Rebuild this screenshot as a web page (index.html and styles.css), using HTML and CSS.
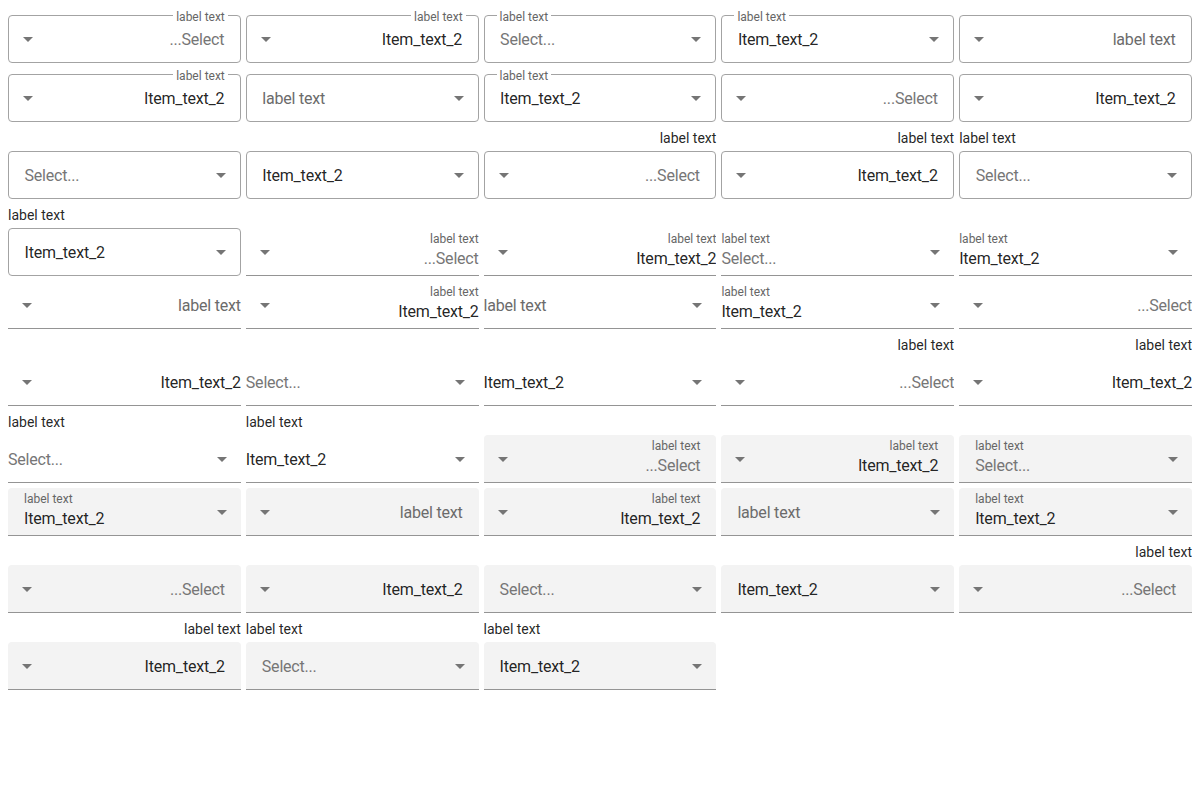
FILE: index.html
```html
<!DOCTYPE html>
<html lang="en">
<head>
<meta charset="utf-8">
<title>Select variants</title>
<link rel="stylesheet" href="styles.css">
</head>
<body>
<div class="grid">
  <!-- outlined -->
  <div class="cell o pad" dir="rtl"><div class="field"><span class="notch">label text</span><span class="text ph">Select...</span><svg class="arrow" viewBox="0 0 24 24"><path d="M7 10l5 5 5-5z"/></svg></div></div>
  <div class="cell o pad" dir="rtl"><div class="field"><span class="notch">label text</span><span class="text val">Item_text_2</span><svg class="arrow" viewBox="0 0 24 24"><path d="M7 10l5 5 5-5z"/></svg></div></div>
  <div class="cell o pad"><div class="field"><span class="notch">label text</span><span class="text ph">Select...</span><svg class="arrow" viewBox="0 0 24 24"><path d="M7 10l5 5 5-5z"/></svg></div></div>
  <div class="cell o pad"><div class="field"><span class="notch">label text</span><span class="text val">Item_text_2</span><svg class="arrow" viewBox="0 0 24 24"><path d="M7 10l5 5 5-5z"/></svg></div></div>
  <div class="cell o pad" dir="rtl"><div class="field"><span class="text lbl">label text</span><svg class="arrow" viewBox="0 0 24 24"><path d="M7 10l5 5 5-5z"/></svg></div></div>

  <div class="cell o pad" dir="rtl"><div class="field"><span class="notch">label text</span><span class="text val">Item_text_2</span><svg class="arrow" viewBox="0 0 24 24"><path d="M7 10l5 5 5-5z"/></svg></div></div>
  <div class="cell o pad"><div class="field"><span class="text lbl">label text</span><svg class="arrow" viewBox="0 0 24 24"><path d="M7 10l5 5 5-5z"/></svg></div></div>
  <div class="cell o pad"><div class="field"><span class="notch">label text</span><span class="text val">Item_text_2</span><svg class="arrow" viewBox="0 0 24 24"><path d="M7 10l5 5 5-5z"/></svg></div></div>
  <div class="cell o pad" dir="rtl"><div class="field"><span class="text ph">Select...</span><svg class="arrow" viewBox="0 0 24 24"><path d="M7 10l5 5 5-5z"/></svg></div></div>
  <div class="cell o pad" dir="rtl"><div class="field"><span class="text val">Item_text_2</span><svg class="arrow" viewBox="0 0 24 24"><path d="M7 10l5 5 5-5z"/></svg></div></div>

  <div class="cell o pad"><div class="field"><span class="text ph">Select...</span><svg class="arrow" viewBox="0 0 24 24"><path d="M7 10l5 5 5-5z"/></svg></div></div>
  <div class="cell o pad"><div class="field"><span class="text val">Item_text_2</span><svg class="arrow" viewBox="0 0 24 24"><path d="M7 10l5 5 5-5z"/></svg></div></div>
  <div class="cell o" dir="rtl"><div class="above">label text</div><div class="field"><span class="text ph">Select...</span><svg class="arrow" viewBox="0 0 24 24"><path d="M7 10l5 5 5-5z"/></svg></div></div>
  <div class="cell o" dir="rtl"><div class="above">label text</div><div class="field"><span class="text val">Item_text_2</span><svg class="arrow" viewBox="0 0 24 24"><path d="M7 10l5 5 5-5z"/></svg></div></div>
  <div class="cell o"><div class="above">label text</div><div class="field"><span class="text ph">Select...</span><svg class="arrow" viewBox="0 0 24 24"><path d="M7 10l5 5 5-5z"/></svg></div></div>

  <div class="cell o"><div class="above">label text</div><div class="field"><span class="text val">Item_text_2</span><svg class="arrow" viewBox="0 0 24 24"><path d="M7 10l5 5 5-5z"/></svg></div></div>

  <!-- standard -->
  <div class="cell s" dir="rtl"><div class="field float"><span class="text"><span class="small">label text</span><span class="ph">Select...</span></span><svg class="arrow" viewBox="0 0 24 24"><path d="M7 10l5 5 5-5z"/></svg></div></div>
  <div class="cell s" dir="rtl"><div class="field float"><span class="text"><span class="small">label text</span><span class="val">Item_text_2</span></span><svg class="arrow" viewBox="0 0 24 24"><path d="M7 10l5 5 5-5z"/></svg></div></div>
  <div class="cell s"><div class="field float"><span class="text"><span class="small">label text</span><span class="ph">Select...</span></span><svg class="arrow" viewBox="0 0 24 24"><path d="M7 10l5 5 5-5z"/></svg></div></div>
  <div class="cell s"><div class="field float"><span class="text"><span class="small">label text</span><span class="val">Item_text_2</span></span><svg class="arrow" viewBox="0 0 24 24"><path d="M7 10l5 5 5-5z"/></svg></div></div>

  <div class="cell s" dir="rtl"><div class="field"><span class="text lbl">label text</span><svg class="arrow" viewBox="0 0 24 24"><path d="M7 10l5 5 5-5z"/></svg></div></div>
  <div class="cell s" dir="rtl"><div class="field float"><span class="text"><span class="small">label text</span><span class="val">Item_text_2</span></span><svg class="arrow" viewBox="0 0 24 24"><path d="M7 10l5 5 5-5z"/></svg></div></div>
  <div class="cell s"><div class="field"><span class="text lbl">label text</span><svg class="arrow" viewBox="0 0 24 24"><path d="M7 10l5 5 5-5z"/></svg></div></div>
  <div class="cell s"><div class="field float"><span class="text"><span class="small">label text</span><span class="val">Item_text_2</span></span><svg class="arrow" viewBox="0 0 24 24"><path d="M7 10l5 5 5-5z"/></svg></div></div>
  <div class="cell s" dir="rtl"><div class="field"><span class="text ph">Select...</span><svg class="arrow" viewBox="0 0 24 24"><path d="M7 10l5 5 5-5z"/></svg></div></div>

  <div class="cell s" dir="rtl"><div class="field"><span class="text val">Item_text_2</span><svg class="arrow" viewBox="0 0 24 24"><path d="M7 10l5 5 5-5z"/></svg></div></div>
  <div class="cell s"><div class="field"><span class="text ph">Select...</span><svg class="arrow" viewBox="0 0 24 24"><path d="M7 10l5 5 5-5z"/></svg></div></div>
  <div class="cell s"><div class="field"><span class="text val">Item_text_2</span><svg class="arrow" viewBox="0 0 24 24"><path d="M7 10l5 5 5-5z"/></svg></div></div>
  <div class="cell s" dir="rtl"><div class="above">label text</div><div class="field"><span class="text ph">Select...</span><svg class="arrow" viewBox="0 0 24 24"><path d="M7 10l5 5 5-5z"/></svg></div></div>
  <div class="cell s" dir="rtl"><div class="above">label text</div><div class="field"><span class="text val">Item_text_2</span><svg class="arrow" viewBox="0 0 24 24"><path d="M7 10l5 5 5-5z"/></svg></div></div>

  <div class="cell s"><div class="above">label text</div><div class="field"><span class="text ph">Select...</span><svg class="arrow" viewBox="0 0 24 24"><path d="M7 10l5 5 5-5z"/></svg></div></div>
  <div class="cell s"><div class="above">label text</div><div class="field"><span class="text val">Item_text_2</span><svg class="arrow" viewBox="0 0 24 24"><path d="M7 10l5 5 5-5z"/></svg></div></div>

  <!-- filled -->
  <div class="cell f" dir="rtl"><div class="field float"><span class="text"><span class="small">label text</span><span class="ph">Select...</span></span><svg class="arrow" viewBox="0 0 24 24"><path d="M7 10l5 5 5-5z"/></svg></div></div>
  <div class="cell f" dir="rtl"><div class="field float"><span class="text"><span class="small">label text</span><span class="val">Item_text_2</span></span><svg class="arrow" viewBox="0 0 24 24"><path d="M7 10l5 5 5-5z"/></svg></div></div>
  <div class="cell f"><div class="field float"><span class="text"><span class="small">label text</span><span class="ph">Select...</span></span><svg class="arrow" viewBox="0 0 24 24"><path d="M7 10l5 5 5-5z"/></svg></div></div>

  <div class="cell f"><div class="field float"><span class="text"><span class="small">label text</span><span class="val">Item_text_2</span></span><svg class="arrow" viewBox="0 0 24 24"><path d="M7 10l5 5 5-5z"/></svg></div></div>
  <div class="cell f" dir="rtl"><div class="field"><span class="text lbl">label text</span><svg class="arrow" viewBox="0 0 24 24"><path d="M7 10l5 5 5-5z"/></svg></div></div>
  <div class="cell f" dir="rtl"><div class="field float"><span class="text"><span class="small">label text</span><span class="val">Item_text_2</span></span><svg class="arrow" viewBox="0 0 24 24"><path d="M7 10l5 5 5-5z"/></svg></div></div>
  <div class="cell f"><div class="field"><span class="text lbl">label text</span><svg class="arrow" viewBox="0 0 24 24"><path d="M7 10l5 5 5-5z"/></svg></div></div>
  <div class="cell f"><div class="field float"><span class="text"><span class="small">label text</span><span class="val">Item_text_2</span></span><svg class="arrow" viewBox="0 0 24 24"><path d="M7 10l5 5 5-5z"/></svg></div></div>

  <div class="cell f" dir="rtl"><div class="field"><span class="text ph">Select...</span><svg class="arrow" viewBox="0 0 24 24"><path d="M7 10l5 5 5-5z"/></svg></div></div>
  <div class="cell f" dir="rtl"><div class="field"><span class="text val">Item_text_2</span><svg class="arrow" viewBox="0 0 24 24"><path d="M7 10l5 5 5-5z"/></svg></div></div>
  <div class="cell f"><div class="field"><span class="text ph">Select...</span><svg class="arrow" viewBox="0 0 24 24"><path d="M7 10l5 5 5-5z"/></svg></div></div>
  <div class="cell f"><div class="field"><span class="text val">Item_text_2</span><svg class="arrow" viewBox="0 0 24 24"><path d="M7 10l5 5 5-5z"/></svg></div></div>
  <div class="cell f" dir="rtl"><div class="above">label text</div><div class="field"><span class="text ph">Select...</span><svg class="arrow" viewBox="0 0 24 24"><path d="M7 10l5 5 5-5z"/></svg></div></div>

  <div class="cell f" dir="rtl"><div class="above">label text</div><div class="field"><span class="text val">Item_text_2</span><svg class="arrow" viewBox="0 0 24 24"><path d="M7 10l5 5 5-5z"/></svg></div></div>
  <div class="cell f"><div class="above">label text</div><div class="field"><span class="text ph">Select...</span><svg class="arrow" viewBox="0 0 24 24"><path d="M7 10l5 5 5-5z"/></svg></div></div>
  <div class="cell f"><div class="above">label text</div><div class="field"><span class="text val">Item_text_2</span><svg class="arrow" viewBox="0 0 24 24"><path d="M7 10l5 5 5-5z"/></svg></div></div>
</div>
</body>
</html>
```

FILE: styles.css
```css
body {
  margin: 8px;
  background: #fff;
  font-family: Roboto, "Liberation Sans", Arial, sans-serif;
}

.grid {
  display: grid;
  grid-template-columns: repeat(5, minmax(0, 1fr));
  column-gap: 5px;
  row-gap: 5px;
  align-items: end;
  padding-top: 1px;
}

.cell {
  display: flex;
  flex-direction: column;
  min-width: 0;
}

.cell.pad {
  padding-top: 6px;
}

.above {
  font-size: 14px;
  line-height: 20px;
  padding-top: 0.5px;
  margin-bottom: 3.5px;
  color: rgba(0, 0, 0, 0.87);
  white-space: nowrap;
}

.field {
  position: relative;
  height: 48px;
  box-sizing: border-box;
  display: flex;
  align-items: center;
}

.o .field {
  border: 1px solid #a3a3a3;
  border-radius: 4px;
}

.s .field {
  border-bottom: 1px solid #949494;
}

.f .field {
  background: #f3f3f3;
  border-radius: 4px 4px 0 0;
  border-bottom: 1px solid #949494;
}

.text {
  flex: 1;
  min-width: 0;
  font-size: 16px;
  line-height: 19px;
  letter-spacing: -0.2px;
  padding-top: 2px;
  white-space: nowrap;
  overflow: hidden;
}

.o .text {
  padding-top: 0;
  padding-inline-start: 15.5px;
}

.f .text {
  padding-inline-start: 16px;
}

.float .text {
  align-self: stretch;
  display: flex;
  flex-direction: column;
  padding-top: 4px;
}

.float .text > :last-child {
  margin-top: 3px;
}

.small {
  font-size: 12px;
  line-height: 14px;
  letter-spacing: 0;
  color: #666;
}

.val {
  color: rgba(0, 0, 0, 0.87);
}

.ph {
  color: #767676;
}

.lbl {
  color: #6b6b6b;
}

.arrow {
  flex: none;
  width: 24px;
  height: 24px;
  margin-inline-end: 7px;
  fill: #757575;
}

.notch {
  position: absolute;
  top: -6px;
  inset-inline-start: 12px;
  padding: 0 3px;
  background: #fff;
  font-size: 12px;
  line-height: 14px;
  color: #666;
  white-space: nowrap;
}
```
